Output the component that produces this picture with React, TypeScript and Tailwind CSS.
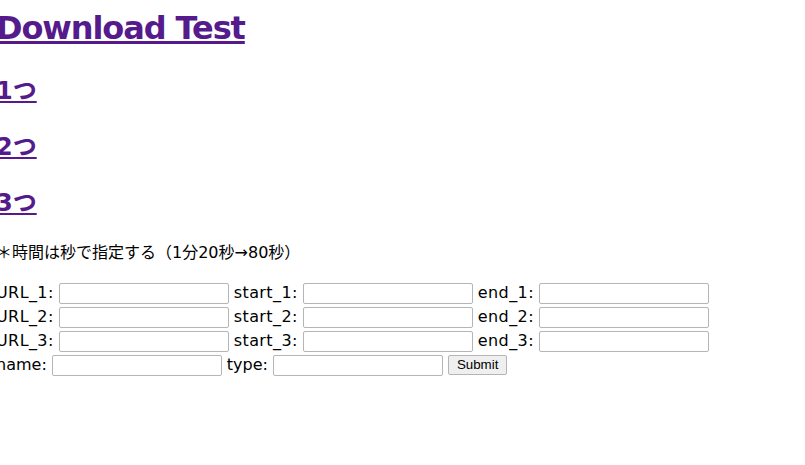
import React from 'react';

const font = { fontFamily: '"DejaVu Sans", "Noto Sans CJK JP", sans-serif' };

const Field = ({ w = 'w-[170px]' }: { w?: string }) => (
  <input
    type="text"
    className={`${w} h-[21px] align-middle border border-[#b5b5b5] rounded-[2px] bg-white px-[2px] text-[13px]`}
  />
);

const App = () => {
  return (
    <div className="-ml-1 bg-white min-h-screen text-black text-[16px]" style={font}>
      <h1 className="pt-1 text-[32px] font-bold leading-[48px] mb-[21px] tracking-[-1.1px]">
        <a href="#" className="text-[#551a8b] underline">Download Test</a>
      </h1>
      {['1つ', '2つ', '3つ'].map((t) => (
        <h2 key={t} className="text-[24px] font-bold leading-[36px] my-5">
          <a href="#" className="text-[#551a8b] underline">{t}</a>
        </h2>
      ))}
      <p className="leading-6 mb-4">＊時間は秒で指定する（1分20秒→80秒）</p>

      <form className="leading-6">
        {[1, 2, 3].map((n) => (
          <div key={n} className="flex items-center h-6 gap-[5px]">
            <span className="tracking-[0.4px]">URL_{n}:</span>
            <Field />
            <span className="tracking-[0.4px]">start_{n}:</span>
            <Field />
            <span className="tracking-[0.4px]">end_{n}:</span>
            <Field />
          </div>
        ))}
        <div className="flex items-center h-6 gap-[5px]">
          <span>name:</span>
          <Field />
          <span>type:</span>
          <Field />
          <button
            type="button"
            className="h-[20px] px-[8px] border border-[#b5b5b5] rounded-[2px] bg-[#efefef] text-[13.33px] leading-none"
            style={{ fontFamily: '"Liberation Sans", Arial, sans-serif' }}
          >
            Submit
          </button>
        </div>
      </form>
    </div>
  );
};

export default App;
